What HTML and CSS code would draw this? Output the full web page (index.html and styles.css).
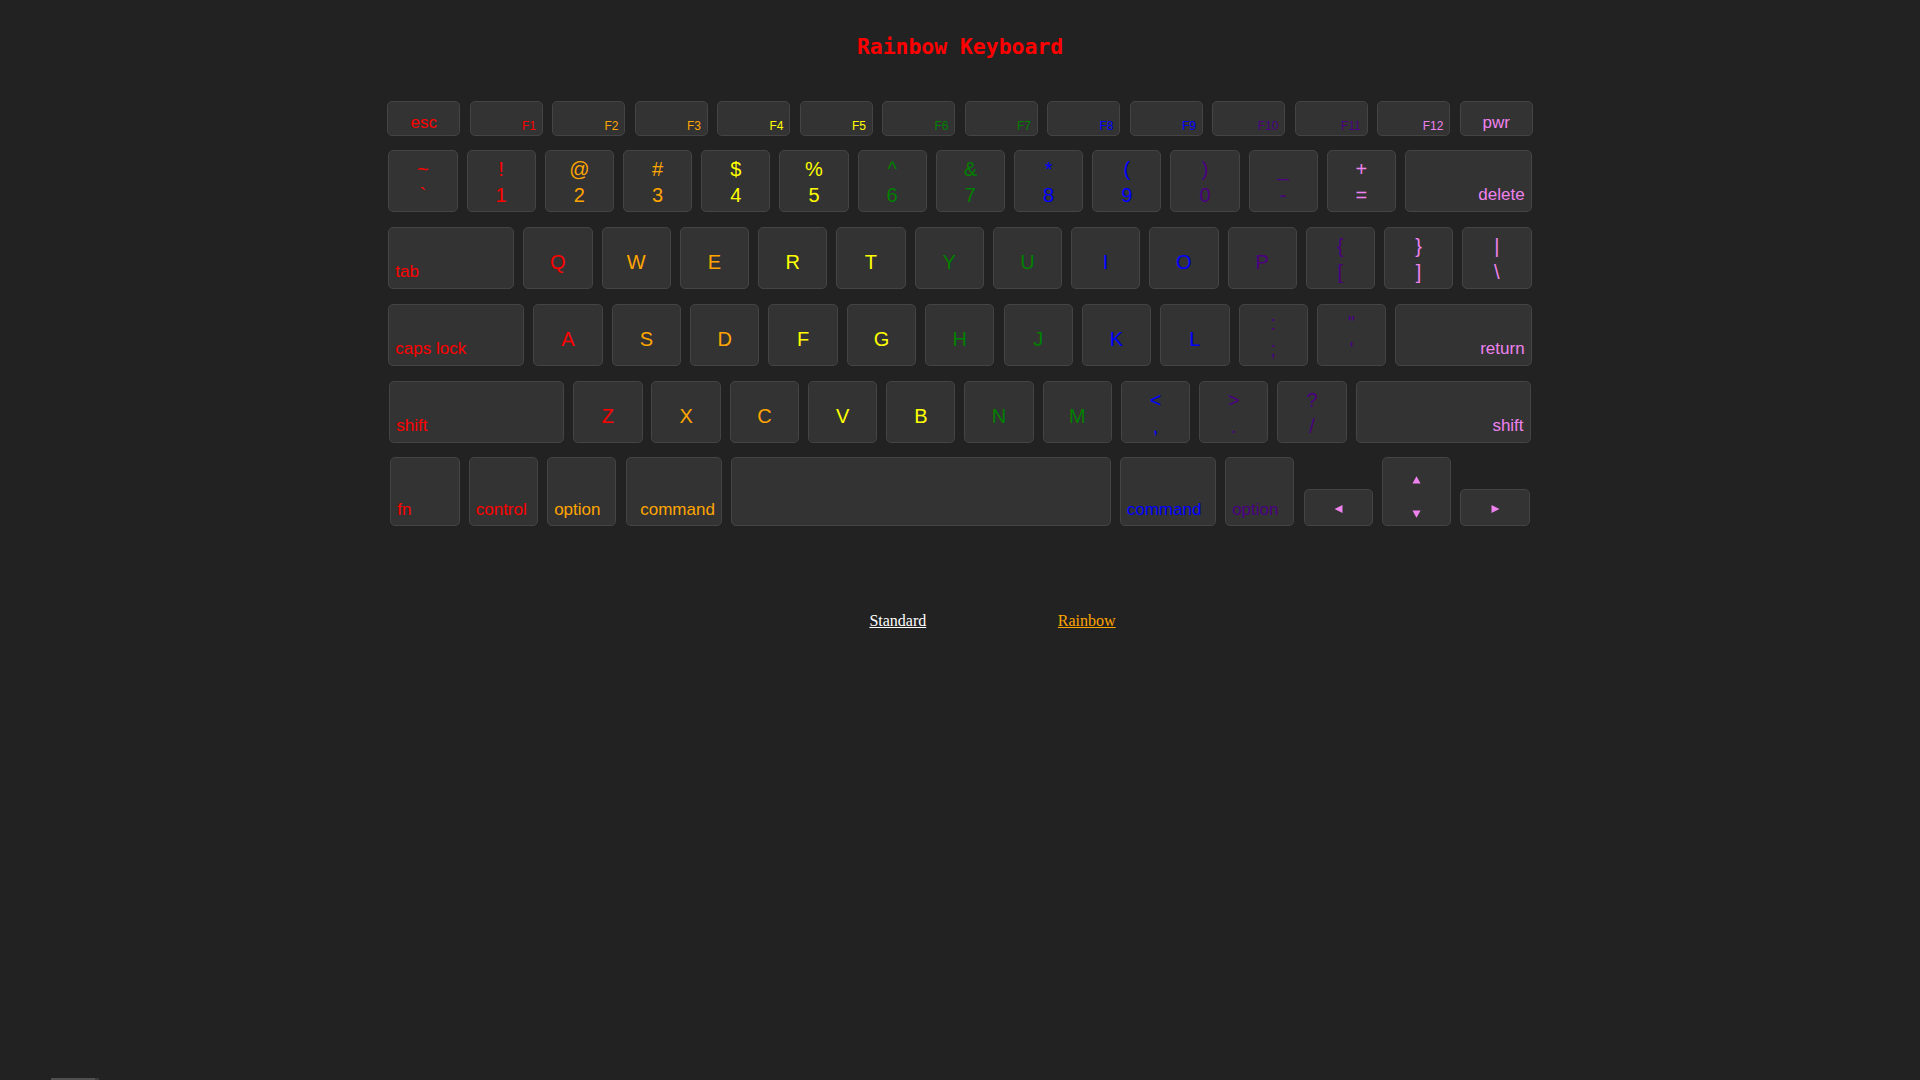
FILE: index.html
```html
<!DOCTYPE html>
<html lang="en">
<head>
<meta charset="utf-8">
<title>Rainbow Keyboard</title>
<link rel="stylesheet" href="styles.css">
</head>
<body>
<h1 class="title">Rainbow Keyboard</h1>
<div class="keyboard">
  <div class="row row-f">
    <div class="key fk k-fc red">esc</div>
    <div class="key fk k-fn red">F1</div>
    <div class="key fk k-fn orange">F2</div>
    <div class="key fk k-fn orange">F3</div>
    <div class="key fk k-fn yellow">F4</div>
    <div class="key fk k-fn yellow">F5</div>
    <div class="key fk k-fn green">F6</div>
    <div class="key fk k-fn green">F7</div>
    <div class="key fk k-fn blue">F8</div>
    <div class="key fk k-fn blue">F9</div>
    <div class="key fk k-fn indigo">F10</div>
    <div class="key fk k-fn indigo">F11</div>
    <div class="key fk k-fn violet">F12</div>
    <div class="key fk k-fc violet">pwr</div>
  </div>
  <div class="row row-num">
    <div class="key u k-dual red"><span>~</span><span>`</span></div>
    <div class="key u k-dual red"><span>!</span><span>1</span></div>
    <div class="key u k-dual orange"><span>@</span><span>2</span></div>
    <div class="key u k-dual orange"><span>#</span><span>3</span></div>
    <div class="key u k-dual yellow"><span>$</span><span>4</span></div>
    <div class="key u k-dual yellow"><span>%</span><span>5</span></div>
    <div class="key u k-dual green"><span>^</span><span>6</span></div>
    <div class="key u k-dual green"><span>&amp;</span><span>7</span></div>
    <div class="key u k-dual blue"><span>*</span><span>8</span></div>
    <div class="key u k-dual blue"><span>(</span><span>9</span></div>
    <div class="key u k-dual indigo"><span>)</span><span>0</span></div>
    <div class="key u k-dual indigo"><span>_</span><span>-</span></div>
    <div class="key u k-dual violet"><span>+</span><span>=</span></div>
    <div class="key w-delete k-mod-r violet">delete</div>
  </div>
  <div class="row row-tab">
    <div class="key w-tab k-mod-l red">tab</div>
    <div class="key u k-letter red">Q</div>
    <div class="key u k-letter orange">W</div>
    <div class="key u k-letter orange">E</div>
    <div class="key u k-letter yellow">R</div>
    <div class="key u k-letter yellow">T</div>
    <div class="key u k-letter green">Y</div>
    <div class="key u k-letter green">U</div>
    <div class="key u k-letter blue">I</div>
    <div class="key u k-letter blue">O</div>
    <div class="key u k-letter indigo">P</div>
    <div class="key u k-dual indigo"><span>{</span><span>[</span></div>
    <div class="key u k-dual violet"><span>}</span><span>]</span></div>
    <div class="key u k-dual violet"><span>|</span><span>\</span></div>
  </div>
  <div class="row row-caps">
    <div class="key w-caps k-mod-l red">caps lock</div>
    <div class="key u k-letter red">A</div>
    <div class="key u k-letter orange">S</div>
    <div class="key u k-letter orange">D</div>
    <div class="key u k-letter yellow">F</div>
    <div class="key u k-letter yellow">G</div>
    <div class="key u k-letter green">H</div>
    <div class="key u k-letter green">J</div>
    <div class="key u k-letter blue">K</div>
    <div class="key u k-letter blue">L</div>
    <div class="key u k-dual indigo"><span>:</span><span>;</span></div>
    <div class="key u k-dual indigo"><span>"</span><span>'</span></div>
    <div class="key w-return k-mod-r violet">return</div>
  </div>
  <div class="row row-shift">
    <div class="key w-shift k-mod-l red">shift</div>
    <div class="key u k-letter red">Z</div>
    <div class="key u k-letter orange">X</div>
    <div class="key u k-letter orange">C</div>
    <div class="key u k-letter yellow">V</div>
    <div class="key u k-letter yellow">B</div>
    <div class="key u k-letter green">N</div>
    <div class="key u k-letter green">M</div>
    <div class="key u k-dual blue"><span>&lt;</span><span>,</span></div>
    <div class="key u k-dual indigo"><span>&gt;</span><span>.</span></div>
    <div class="key u k-dual indigo"><span>?</span><span>/</span></div>
    <div class="key w-shift k-mod-r violet">shift</div>
  </div>
  <div class="row row-bottom">
    <div class="key u k-mod-l k-low red">fn</div>
    <div class="key u k-mod-l k-low red">control</div>
    <div class="key u k-mod-l k-low orange">option</div>
    <div class="key w-cmd k-mod-r k-low orange">command</div>
    <div class="key w-space"></div>
    <div class="key w-cmd k-mod-l k-low blue">command</div>
    <div class="key u k-mod-l k-low indigo">option</div>
    <div class="key u k-arrow violet"><svg class="tri" width="9" height="8" viewBox="0 0 9 8"><polygon points="0.5,4 8.5,0 8.5,8" fill="currentColor"/></svg></div>
    <div class="key u k-updown violet">
      <svg class="tri" width="9" height="8" viewBox="0 0 9 8"><polygon points="4.5,0.3 8.6,7.6 0.4,7.6" fill="currentColor"/></svg>
      <svg class="tri" width="9" height="8" viewBox="0 0 9 8"><polygon points="0.4,0.4 8.6,0.4 4.5,7.7" fill="currentColor"/></svg>
    </div>
    <div class="key u k-arrow violet"><svg class="tri" width="9" height="8" viewBox="0 0 9 8"><polygon points="0.5,0 8.5,4 0.5,8" fill="currentColor"/></svg></div>
  </div>
</div>
<nav class="modes">
  <a class="mode mode-standard" href="#">Standard</a>
  <a class="mode mode-rainbow" href="#">Rainbow</a>
</nav>
<div class="footer"><span class="footer-thumb"></span></div>
</body>
</html>
```

FILE: styles.css
```css
* { box-sizing: border-box; }

html, body {
  margin: 0;
  padding: 0;
}

body {
  background: #222222;
  font-family: "Liberation Sans", Arial, sans-serif;
  min-height: 100vh;
  height: 100vh;
  overflow: hidden;
  display: flex;
  flex-direction: column;
}

.title {
  margin: 34px 0 0;
  font-family: "DejaVu Sans Mono", "Liberation Mono", monospace;
  font-size: 21.4px;
  line-height: 26px;
  font-weight: bold;
  color: #ff0000;
  text-align: center;
}

.keyboard {
  width: 1146px;
  margin: 41px auto 0;
  display: flex;
  flex-direction: column;
}

.row {
  display: flex;
  justify-content: space-between;
}

.row-f { height: 35px; margin-bottom: 14px; }
.row-num, .row-tab, .row-caps { height: 62px; margin-bottom: 15px; padding: 0 1.3px; }
.row-shift { height: 62px; margin-bottom: 14px; padding: 0 2.3px; }
.row-bottom { height: 69px; padding: 0 3.3px; align-items: flex-end; }

.key {
  background: #333333;
  border: 1px solid #444444;
  border-radius: 5px;
  display: flex;
  height: 100%;
  white-space: nowrap;
}

.fk { width: 73.4px; }
.u { width: 69.3px; }
.w-delete { width: 126.7px; }
.w-tab { width: 126px; }
.w-caps { width: 136px; }
.w-return { width: 136.3px; }
.w-shift { width: 175px; }
.w-cmd { width: 96.3px; }
.w-space { width: 379.6px; }

/* function row */
.k-fn {
  justify-content: flex-end;
  align-items: flex-end;
  padding: 0 6px 3px;
  font-size: 12px;
  line-height: 12px;
}
.k-fc {
  justify-content: center;
  align-items: flex-end;
  padding: 0 6px 3px;
  font-size: 17px;
  line-height: 19px;
}

/* single letter */
.k-letter {
  justify-content: center;
  align-items: flex-start;
  padding-top: 22px;
  font-size: 20px;
  line-height: 24px;
}

/* two symbols */
.k-dual {
  flex-direction: column;
  align-items: center;
  padding-top: 6px;
  font-size: 20px;
  line-height: 25.6px;
}

/* modifiers */
.k-mod-l, .k-mod-r {
  align-items: flex-end;
  padding: 0 6px 7px;
  font-size: 17px;
  line-height: 19px;
}
.k-mod-l { justify-content: flex-start; }
.k-mod-r { justify-content: flex-end; }
.k-low { padding-bottom: 6px; }

/* arrows */
.k-arrow {
  height: 37px;
  justify-content: center;
  align-items: flex-start;
  padding-top: 15px;
}
.k-updown {
  flex-direction: column;
  align-items: center;
  padding-top: 17.7px;
  gap: 26px;
}
.tri { display: block; }

.red { color: #ff0000; }
.orange { color: #ffa500; }
.yellow { color: #ffff00; }
.green { color: #008000; }
.blue { color: #0000ff; }
.indigo { color: #4b0082; }
.violet { color: #ee82ee; }

.modes {
  margin-top: 86px;
  display: flex;
  justify-content: center;
  gap: 131.6px;
  padding-left: 65px;
  font-family: "Liberation Serif", "Times New Roman", serif;
  font-size: 16px;
  line-height: 18px;
}
.mode { text-decoration: underline; }
.mode-standard { color: #ffffff; }
.mode-rainbow { color: #ffa500; }

.footer {
  margin-top: auto;
  height: 2px;
  padding-left: 51px;
  display: flex;
}
.footer-thumb {
  width: 48px;
  height: 2px;
  background: linear-gradient(to right, #505050 0, #505050 44px, #3a3a3a 44px);
}
```
